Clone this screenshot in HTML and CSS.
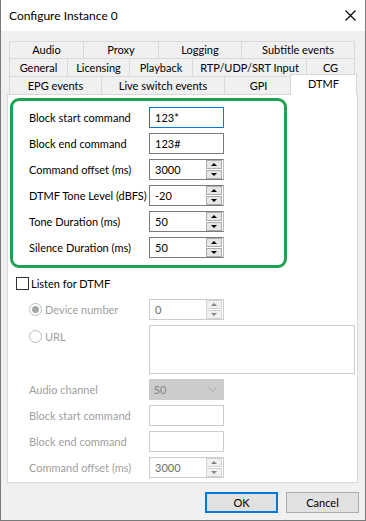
FILE: index.html
```html
<!DOCTYPE html>
<html>
<head>
<meta charset="utf-8">
<link rel="stylesheet" href="styles.css">
</head>
<body>
<div class="window">
  <div class="titlebar">
    <span class="title">Configure Instance 0</span>
    <svg class="close" width="11" height="11" viewBox="0 0 11 11"><path d="M0.5 0.5 L10.5 10.5 M10.5 0.5 L0.5 10.5" stroke="#000" stroke-width="1.1" fill="none"/></svg>
  </div>
  <div class="client">
    <div class="tabs">
      <div class="tabrow r1">
        <div class="tab t-audio">Audio</div>
        <div class="tab t-proxy">Proxy</div>
        <div class="tab t-logging">Logging</div>
        <div class="tab t-subtitle last">Subtitle events</div>
      </div>
      <div class="tabrow r2">
        <div class="tab t-general">General</div>
        <div class="tab t-licensing">Licensing</div>
        <div class="tab t-playback">Playback</div>
        <div class="tab t-rtp">RTP/UDP/SRT Input</div>
        <div class="tab t-cg last">CG</div>
      </div>
      <div class="tabrow r3">
        <div class="tab t-epg">EPG events</div>
        <div class="tab t-live">Live switch events</div>
        <div class="tab t-gpi">GPI</div>
        <div class="tab t-dtmf last selected">DTMF</div>
      </div>
    </div>
    <div class="panel">
      <div class="greenbox">
        <div class="row"><span class="label">Block start command</span><div class="edit focused">123*</div></div>
        <div class="row"><span class="label">Block end command</span><div class="edit">123#</div></div>
        <div class="row"><span class="label">Command offset (ms)</span><div class="spin"><span class="val">3000</span><span class="btns"><span class="sb up"></span><span class="sb dn"></span></span></div></div>
        <div class="row"><span class="label">DTMF Tone Level (dBFS)</span><div class="spin"><span class="val">-20</span><span class="btns"><span class="sb up"></span><span class="sb dn"></span></span></div></div>
        <div class="row"><span class="label">Tone Duration (ms)</span><div class="spin"><span class="val">50</span><span class="btns"><span class="sb up"></span><span class="sb dn"></span></span></div></div>
        <div class="row"><span class="label">Silence Duration (ms)</span><div class="spin"><span class="val">50</span><span class="btns"><span class="sb up"></span><span class="sb dn"></span></span></div></div>
      </div>
      <div class="checkrow"><span class="checkbox"></span><span class="checktext">Listen for DTMF</span></div>
      <div class="lower">
        <div class="row"><span class="label dis radiolabel"><span class="radio checked"></span>Device number</span><div class="spin disabled"><span class="val">0</span><span class="btns"><span class="sb up"></span><span class="sb dn"></span></span></div></div>
        <div class="row top"><span class="label dis radiolabel urllabel"><span class="radio"></span>URL</span><div class="textarea"></div></div>
        <div class="row"><span class="label dis">Audio channel</span><div class="combo"><span class="val">S0</span><svg class="chev" width="9" height="5" viewBox="0 0 9 5"><path d="M0.5 0.5 L4.5 4.5 L8.5 0.5" stroke="#a8a8a8" fill="none"/></svg></div></div>
        <div class="row"><span class="label dis">Block start command</span><div class="edit disabled"></div></div>
        <div class="row"><span class="label dis">Block end command</span><div class="edit disabled"></div></div>
        <div class="row"><span class="label dis">Command offset (ms)</span><div class="spin disabled"><span class="val">3000</span><span class="btns"><span class="sb up"></span><span class="sb dn"></span></span></div></div>
      </div>
    </div>
    <div class="buttons">
      <div class="btn default">OK</div>
      <div class="btn">Cancel</div>
    </div>
  </div>
</div>
</body>
</html>
```
FILE: styles.css
```css
* { box-sizing: border-box; }
html, body { margin: 0; padding: 0; }
body {
  font-family: Lato, "Noto Sans", sans-serif;
  font-size: 11px;
  color: #000;
  background: #f0f0f0;
}
.window {
  width: 366px;
  height: 521px;
  border-left: 1px solid #7a7a7a;
  border-right: 1px solid #7a7a7a;
  border-bottom: 1px solid #7a7a7a;
  background: #f0f0f0;
  display: flex;
  flex-direction: column;
}
.titlebar {
  height: 31px;
  background: #fff;
  display: flex;
  align-items: center;
  justify-content: space-between;
  padding-left: 8px;
  padding-right: 9px;
}
.title { font-size: 12px; }
.close { display: block; margin-top: -1px; }
.client { flex: 1; display: flex; flex-direction: column; }
.tabs { margin-top: 10px; margin-left: 8px; }
.tabrow { display: flex; }
.tab {
  border-top: 1px solid #d9d9d9;
  border-left: 1px solid #d9d9d9;
  background: #f0f0f0;
  display: flex;
  align-items: center;
  justify-content: center;
  height: 18px;
  white-space: nowrap;
  padding-bottom: 1px;
}
.r1 .tab { height: 17px; }
.tab.last { border-right: 1px solid #d9d9d9; }
.t-audio { width: 74px; }
.t-proxy { width: 75px; }
.t-logging { width: 83px; }
.t-subtitle { width: 114px; }
.t-general { width: 58px; }
.t-licensing { width: 62px; }
.t-playback { width: 63px; }
.t-rtp { width: 114px; }
.t-cg { width: 49px; }
.t-epg { width: 92px; }
.t-live { width: 123px; }
.t-gpi { width: 68px; }
.t-dtmf { width: 63px; }
.tab.selected {
  position: relative;
  z-index: 1;
  background: #fff;
  width: 67px;
  margin-left: -2px;
  margin-right: -2px;
  margin-top: -2px;
  height: 21px;
  margin-bottom: -1px;
  border-left-color: #d9d9d9;
  align-items: flex-start;
  padding-top: 2px;
}
.panel {
  margin-left: 6px;
  width: 351px;
  height: 389px;
  border: 1px solid #d9d9d9;
  background: #fff;
}
.greenbox {
  margin-top: 3px;
  margin-left: 2px;
  width: 277px;
  height: 170px;
  border: 3px solid #1fa352;
  border-radius: 9px;
  padding: 6px 0 0 16px;
  display: flex;
  flex-direction: column;
  gap: 5px;
}
.row { display: flex; align-items: center; height: 21px; }
.row.top { align-items: flex-start; height: 49px; }
.label { width: 120px; white-space: nowrap; }
.label.dis { color: #a0a0a0; }
.edit {
  width: 75px;
  height: 21px;
  border: 1px solid #7a7a7a;
  background: #fff;
  padding-left: 5px;
  display: flex;
  align-items: center;
}
.edit.focused { border-color: #0078d7; }
.edit.disabled { border-color: #cccccc; }
.spin {
  width: 75px;
  height: 21px;
  border: 1px solid #7a7a7a;
  border-right-color: #b9b9b9;
  background: #fff;
  display: flex;
  align-items: stretch;
}
.spin .val { flex: 1; padding-left: 5px; display: flex; align-items: center; }
.spin .btns {
  width: 16px;
  display: flex;
  flex-direction: column;
  gap: 1px;
  margin-right: 1px;
}
.sb {
  flex: 1;
  background: #e6e6e6;
  border: 1px solid #adadad;
  position: relative;
  display: flex;
  align-items: center;
  justify-content: center;
}
.sb::after {
  content: "";
  width: 0;
  height: 0;
  border-left: 3px solid transparent;
  border-right: 3px solid transparent;
}
.sb.up::after { border-bottom: 3px solid #000; }
.sb.dn::after { border-top: 3px solid #000; }
.spin.disabled { border-color: #cccccc; }
.spin.disabled .val { color: #6d6d6d; }
.spin.disabled .sb { background: #f0f0f0; border-color: #d4d4d4; }
.spin.disabled .sb.up::after { border-bottom-color: #838383; }
.spin.disabled .sb.dn::after { border-top-color: #838383; }
.checkrow {
  margin-top: 9px;
  margin-left: 8px;
  display: flex;
  align-items: center;
  height: 13px;
}
.checkbox {
  width: 13px;
  height: 13px;
  border: 1px solid #333;
  background: #fff;
}
.checktext { margin-left: 2px; }
.lower {
  margin-top: 9px;
  padding-left: 21px;
  display: flex;
  flex-direction: column;
  gap: 5px;
}
.radiolabel { display: flex; align-items: center; }
.urllabel { margin-top: 5px; }
.radio {
  width: 13px;
  height: 13px;
  border: 1px solid #bcbcbc;
  border-radius: 50%;
  background: #fff;
  margin-right: 3px;
  display: flex;
  align-items: center;
  justify-content: center;
}
.radio.checked::after {
  content: "";
  width: 7px;
  height: 7px;
  border-radius: 50%;
  background: #a8a8a8;
}
.textarea {
  width: 206px;
  height: 49px;
  border: 1px solid #cccccc;
  background: #fff;
}
.combo {
  width: 75px;
  height: 21px;
  background: #cccccc;
  border: 1px solid #cccccc;
  display: flex;
  align-items: center;
  justify-content: space-between;
  padding-left: 4px;
  padding-right: 6px;
  color: #838383;
}
.chev { display: block; }
.buttons {
  margin-top: 9px;
  display: flex;
  justify-content: flex-end;
  gap: 8px;
  padding-right: 6px;
}
.btn {
  width: 73px;
  height: 21px;
  background: #e1e1e1;
  border: 1px solid #adadad;
  display: flex;
  align-items: center;
  justify-content: center;
}
.btn.default { border: 2px solid #0078d7; }
```
